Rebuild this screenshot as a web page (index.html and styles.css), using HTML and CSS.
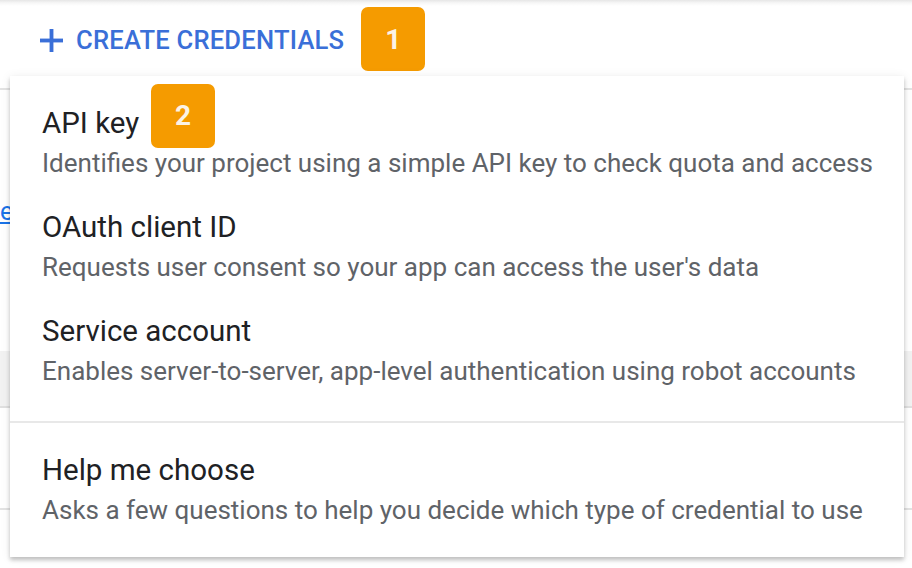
FILE: index.html
```html
<!DOCTYPE html>
<html>
<head>
<meta charset="utf-8">
<link rel="stylesheet" href="styles.css">
</head>
<body>
<div class="page">
  <header class="toolbar">
    <button class="create-btn">
      <svg class="plus" viewBox="0 0 24 24" width="24" height="24"><rect x="10" y="0" width="4" height="24" fill="currentColor"/><rect x="0" y="10" width="24" height="4" fill="currentColor"/></svg>
      <span>CREATE CREDENTIALS</span>
    </button>
    <span class="badge badge-1">1</span>
  </header>
  <div class="bg">
    <div class="bg-rule"></div>
    <div class="bg-link"><a href="#">e</a></div>
    <div class="bg-band"></div>
    <div class="bg-row"></div>
  </div>
  <div class="menu">
    <div class="group">
      <div class="item">
        <div class="title">API key<span class="badge badge-2">2</span></div>
        <div class="desc">Identifies your project using a simple API key to check quota and access</div>
      </div>
      <div class="item">
        <div class="title">OAuth client ID</div>
        <div class="desc">Requests user consent so your app can access the user's data</div>
      </div>
      <div class="item">
        <div class="title">Service account</div>
        <div class="desc">Enables server-to-server, app-level authentication using robot accounts</div>
      </div>
    </div>
    <div class="group group-last">
      <div class="item">
        <div class="title">Help me choose</div>
        <div class="desc">Asks a few questions to help you decide which type of credential to use</div>
      </div>
    </div>
  </div>
</div>
</body>
</html>
```
FILE: styles.css
```css
html, body {
  margin: 0;
  padding: 0;
  background: #fff;
  font-family: Roboto, "Liberation Sans", Arial, sans-serif;
}
.page {
  position: relative;
  width: 912px;
  height: 568px;
  overflow: hidden;
}
.toolbar {
  height: 76px;
  display: flex;
  align-items: flex-start;
  padding-left: 40px;
  box-sizing: border-box;
  background: linear-gradient(to bottom, #e6e6e6 0px, #f7f7f7 3px, #ffffff 6px);
}
.create-btn {
  margin-top: 22px;
  display: flex;
  align-items: center;
  gap: 13px;
  background: none;
  border: 0;
  padding: 0;
  color: #3a6fd8;
  font-family: Roboto, "Liberation Sans", Arial, sans-serif;
  font-weight: 500;
  font-size: 25.6px;
  letter-spacing: 0.2px;
  line-height: 36px;
}
.plus {
  width: 23px;
  height: 23px;
}
.badge {
  display: flex;
  align-items: center;
  justify-content: center;
  width: 64px;
  height: 64px;
  border-radius: 7px;
  background: #f59b00;
  color: #fbf3e6;
  font-weight: 700;
  font-size: 28px;
  font-family: Roboto, "Liberation Sans", Arial, sans-serif;
}
.badge-1 {
  margin-top: 7px;
  margin-left: 17px;
}
.bg {
  display: flex;
  flex-direction: column;
}
.bg-rule {
  margin-top: 12px;
  height: 0;
  border-top: 2px solid #e3e3e3;
}
.bg-link {
  margin-top: 106px;
  font-size: 25px;
  line-height: 32px;
}
.bg-link a {
  color: #1a73e8;
  text-decoration: underline;
}
.bg-band {
  margin-top: 123px;
  height: 55px;
  background: #f2f2f2;
  border-bottom: 2px solid #e0e0e0;
}
.bg-row {
  margin-top: 100px;
  height: 0;
  border-top: 2px solid #e3e3e3;
}
.menu {
  position: absolute;
  left: 10px;
  top: 76px;
  width: 894px;
  background: #fff;
  box-shadow: 0 3px 4px rgba(0,0,0,0.22), 0 1px 10px rgba(0,0,0,0.08);
  display: flex;
  flex-direction: column;
}
.group {
  padding-bottom: 33px;
  border-bottom: 2px solid #e8e8e8;
}
.group-last {
  padding-bottom: 30px;
  border-bottom: 0;
}
.item {
  padding: 30px 16px 1px 32px;
  white-space: nowrap;
}
.title {
  position: relative;
  font-size: 29.5px;
  line-height: 34px;
  color: #202124;
  display: flex;
  align-items: center;
}
.badge-2 {
  position: absolute;
  left: 109px;
  top: -22px;
}
.desc {
  margin-top: 7px;
  font-size: 26px;
  line-height: 32px;
  color: #5f6368;
}
```
